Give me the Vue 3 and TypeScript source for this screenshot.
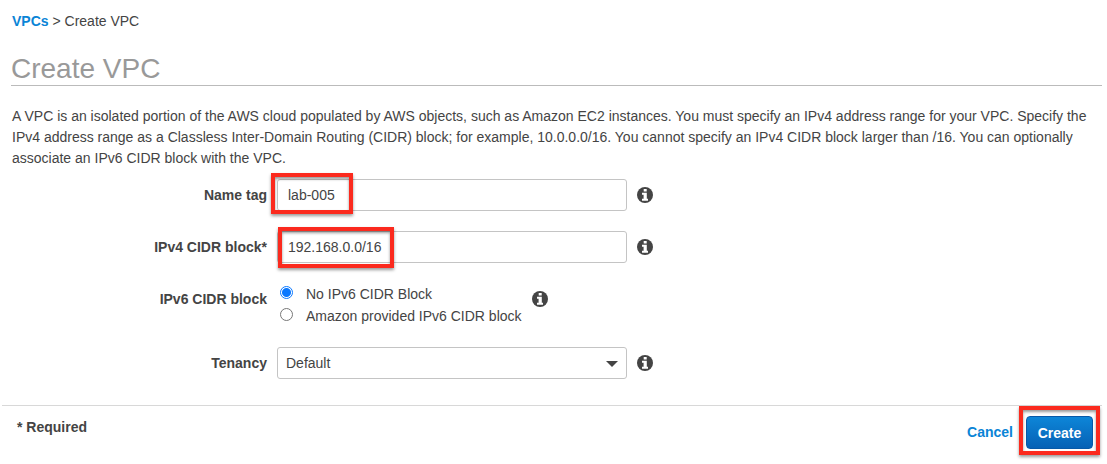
<script setup lang="ts">
import { reactive } from 'vue'

type Ipv6Choice = 'none' | 'amazon'

interface VpcForm {
  name: string
  ipv4: string
  ipv6: Ipv6Choice
  tenancy: string
}

const form = reactive<VpcForm>({
  name: 'lab-005',
  ipv4: '192.168.0.0/16',
  ipv6: 'none',
  tenancy: 'default',
})

const ipv6Options: { value: Ipv6Choice; text: string }[] = [
  { value: 'none', text: 'No IPv6 CIDR Block' },
  { value: 'amazon', text: 'Amazon provided IPv6 CIDR block' },
]
</script>

<template>
  <svg class="symbols" aria-hidden="true">
    <symbol id="info" viewBox="0 0 16 16">
      <circle cx="8" cy="8" r="8" fill="#444" />
      <path fill="#fff" d="M6.7 2h3v2.6h-3zM5 5.8h4.8v5.9H11v2H5v-2h1.6V7.8H5z" />
    </symbol>
  </svg>
  <main class="page">
    <nav class="crumbs"><a href="#vpcs">VPCs</a> &gt; Create VPC</nav>
    <h1>Create VPC</h1>
    <p class="intro">
      A VPC is an isolated portion of the AWS cloud populated by AWS objects, such as Amazon EC2 instances. You must
      specify an IPv4 address range for your VPC. Specify the IPv4 address range as a Classless Inter-Domain Routing
      (CIDR) block; for example, 10.0.0.0/16. You cannot specify an IPv4 CIDR block larger than /16. You can optionally
      associate an IPv6 CIDR block with the VPC.
    </p>

    <form @submit.prevent>
      <div class="fields">
        <div class="row">
          <label class="name" for="name-tag">Name tag</label>
          <div class="control">
            <input id="name-tag" v-model="form.name" class="box" type="text" />
            <span class="mark mark-name"></span>
          </div>
          <svg class="info"><use href="#info" /></svg>
        </div>
        <div class="row">
          <label class="name" for="ipv4">IPv4 CIDR block*</label>
          <div class="control">
            <input id="ipv4" v-model="form.ipv4" class="box" type="text" />
            <span class="mark mark-cidr"></span>
          </div>
          <svg class="info"><use href="#info" /></svg>
        </div>
        <div class="row row-radio" role="radiogroup" aria-labelledby="ipv6-name">
          <span id="ipv6-name" class="name">IPv6 CIDR block</span>
          <div class="choices">
            <label v-for="o in ipv6Options" :key="o.value" class="choice">
              <input v-model="form.ipv6" type="radio" name="ipv6" :value="o.value" />
              <span>{{ o.text }}</span>
            </label>
          </div>
          <svg class="info"><use href="#info" /></svg>
        </div>
        <div class="row">
          <label class="name" for="tenancy">Tenancy</label>
          <div class="control">
            <select id="tenancy" v-model="form.tenancy" class="box">
              <option value="default">Default</option>
              <option value="dedicated">Dedicated</option>
            </select>
            <svg class="caret" viewBox="0 0 12 6"><path d="M0 0h12L6 6z" fill="#444" /></svg>
          </div>
          <svg class="info"><use href="#info" /></svg>
        </div>
      </div>

      <footer class="footer">
        <strong class="required">* Required</strong>
        <div class="actions">
          <a class="cancel" href="#cancel">Cancel</a>
          <div class="submit">
            <button type="submit">Create</button>
            <span class="mark mark-create"></span>
          </div>
        </div>
      </footer>
    </form>
  </main>
</template>

<style>
body {
  margin: 0;
  background: #fff;
}
</style>

<style scoped>
.symbols {
  position: absolute;
  width: 0;
  height: 0;
}
.page {
  padding: 11px 5px 15px 2px;
  font-family: "Helvetica Neue", "Liberation Sans", Arial, sans-serif;
  font-size: 14px;
  line-height: 21px;
  color: #444;
}
a {
  color: #0a84d6;
  font-weight: bold;
  text-decoration: none;
}
.crumbs {
  padding-left: 10px;
}
h1 {
  margin: 21px 0 0 9px;
  padding-bottom: 1px;
  border-bottom: 1px solid #bbb;
  font-size: 28px;
  font-weight: normal;
  line-height: 31px;
  color: #999;
}
.intro {
  margin: 20px 0 0;
  padding-left: 10px;
}
.fields {
  display: flex;
  flex-direction: column;
  gap: 20px;
  padding: 10px 0 26px;
}
.row {
  display: flex;
  align-items: center;
}
.name {
  width: 265px;
  margin-right: 10px;
  font-weight: bold;
  text-align: right;
}
.control {
  position: relative;
  width: 350px;
}
.box {
  display: block;
  box-sizing: border-box;
  width: 100%;
  height: 32px;
  margin: 0;
  padding: 0 10px;
  border: 1px solid #c4c4c4;
  border-radius: 3px;
  background: #fff;
  font: inherit;
  color: #444;
  appearance: none;
}
select.box {
  padding: 0 8px;
}
.caret {
  position: absolute;
  top: 14px;
  right: 9px;
  width: 12px;
  height: 6px;
  pointer-events: none;
}
.info {
  width: 16px;
  height: 16px;
  margin-left: 10px;
}
.mark {
  position: absolute;
  box-sizing: border-box;
  border: 4px solid #fb2a1e;
  box-shadow: 0 2px 3px rgba(0, 0, 0, 0.4), inset 0 2px 3px rgba(0, 0, 0, 0.4);
  pointer-events: none;
}
.mark-name {
  top: -6px;
  left: -6px;
  width: 82px;
  height: 41px;
}
.mark-cidr {
  top: -4px;
  left: 1px;
  width: 116px;
  height: 41px;
}
.row-radio {
  padding-bottom: 12px;
}
.choices {
  display: flex;
  flex-direction: column;
  margin-bottom: -12px;
  padding-left: 3px;
}
.choice {
  display: flex;
  align-items: flex-start;
  line-height: 22px;
}
.choice input {
  appearance: none;
  box-sizing: border-box;
  width: 13px;
  height: 13px;
  margin: 3px 13px 0 0;
  border: 1px solid #777;
  border-radius: 50%;
  background: #fff;
}
.choice input:checked {
  border-color: #0a78ff;
  background: radial-gradient(circle, #0a78ff 4px, #fff 5px);
}
.footer {
  display: flex;
  justify-content: space-between;
  align-items: flex-start;
  border-top: 1px solid #d8d8d8;
}
.required {
  padding: 11px 0 0 15px;
}
.actions {
  display: flex;
  align-items: center;
  gap: 13px;
  padding: 10px 9px 0 0;
}
.submit {
  position: relative;
}
button {
  display: block;
  box-sizing: border-box;
  width: 67px;
  height: 33px;
  padding: 1px 0 0;
  border: 1px solid #0759a8;
  border-radius: 4px;
  background: linear-gradient(#0d86d8, #0661b5);
  font: inherit;
  font-weight: bold;
  color: #fff;
}
.mark-create {
  top: -10px;
  left: -7px;
  width: 81px;
  height: 49px;
}
</style>
